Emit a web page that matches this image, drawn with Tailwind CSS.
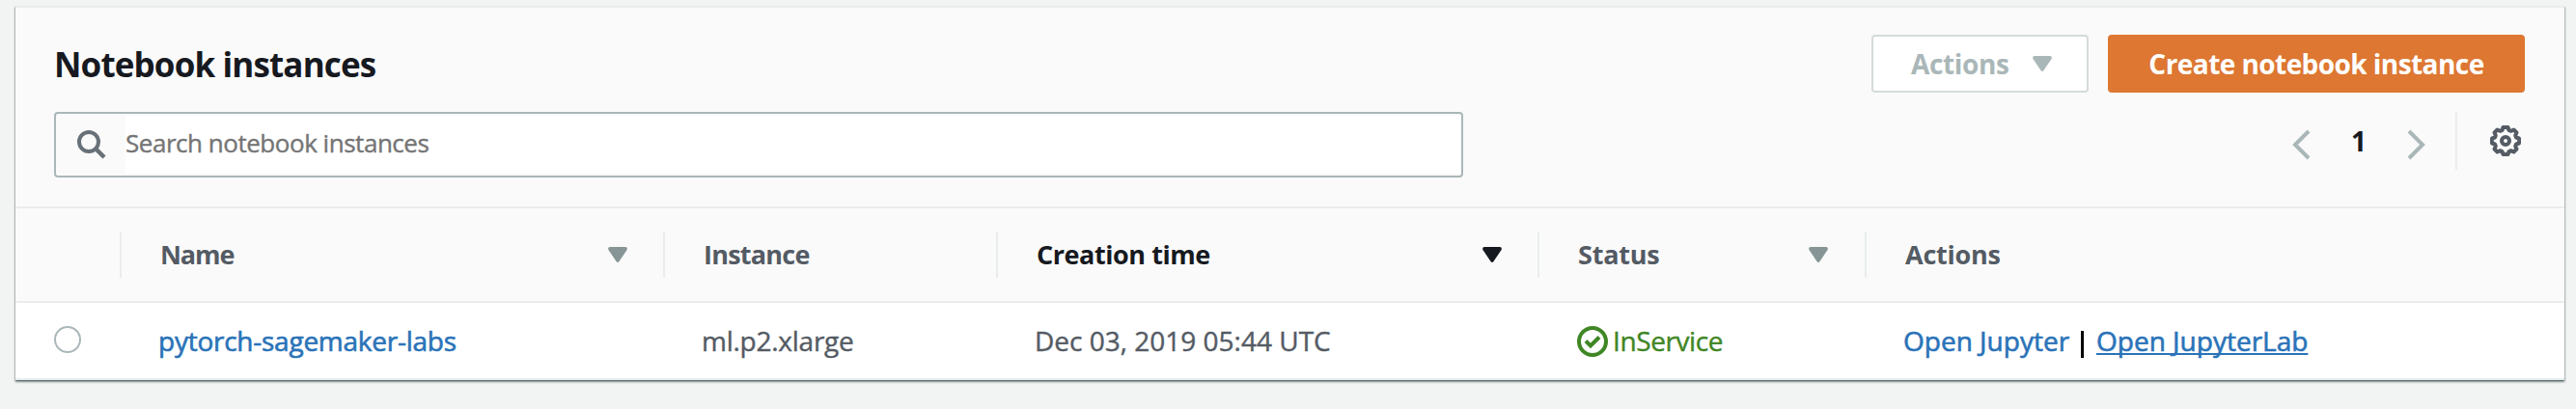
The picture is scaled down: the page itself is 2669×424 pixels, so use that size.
<!DOCTYPE html>
<html lang="en">
<head>
<meta charset="utf-8">
<title>Notebook instances</title>
<script src="https://cdn.jsdelivr.net/npm/@tailwindcss/browser@4"></script>
</head>
<body class="h-[424px] overflow-hidden bg-[#f2f3f3] pt-[6px] pl-4 font-['Open_Sans','Noto_Sans',sans-serif] text-[28px] text-[#545b64]">
<main class="w-[2641px] border-t-2 border-[#eaeded] bg-white shadow-[0_2px_2px_0_rgba(0,28,36,0.5),1px_1px_1px_0_rgba(0,28,36,0.13),-1px_1px_1px_0_rgba(0,28,36,0.13)]">
  <header class="h-[208px] border-b-2 border-[#eaeded] bg-[#fafafa] pt-7 pr-[41px] pl-10">
    <div class="flex h-[60px] items-center justify-between">
      <h1 class="pt-[2px] text-[35px] leading-[60px] font-bold tracking-[-0.86px] text-[#16191f]">Notebook instances</h1>
      <div class="flex gap-5">
        <button class="flex h-[60px] w-[225px] items-center rounded-[4px] border-2 border-[#d5dbdb] bg-white pl-[39px] font-bold tracking-[-0.37px] text-[#aab7b8]">
          <span class="w-[126px] pb-[1px] text-left leading-[54px]">Actions</span>
          <svg class="h-4 w-5" viewBox="0 0 20 16" fill="currentColor"><path d="M2 0h16q2.6.5 1.6 3L11.5 15q-1.500 2-3 0L.4 3Q-.6.500 2 0z"/></svg>
        </button>
        <button class="h-[60px] w-[432px] rounded-[4px] bg-[#dd7732] pb-[1px] font-bold tracking-[-0.56px] whitespace-nowrap text-white">Create notebook instance</button>
      </div>
    </div>
    <div class="mt-5 flex h-[68px] justify-between">
      <div class="flex w-[1460px] rounded-[4px] border-2 border-[#aab7b8] bg-[#fafafa] py-[2px]">
        <div class="flex w-[72px] items-center pl-[22px]">
          <svg class="h-[30px] w-[30px]" viewBox="0 0 30 30" fill="none" stroke="#687078" stroke-width="4"><circle cx="12" cy="12" r="10"/><path d="M19 19l9 9" stroke-width="4.500"/></svg>
        </div>
        <div class="flex-1 rounded-r-[2px] bg-white pb-[3px] text-[26px] leading-[57px] tracking-[-0.47px] text-[#757575] [-webkit-text-stroke:0.4px_currentColor]">Search notebook instances</div>
      </div>
      <div class="flex h-[60px] items-center">
        <svg class="mt-2 h-8 w-5" viewBox="0 0 20 32" fill="none" stroke="#aab7b8" stroke-width="4"><path d="M18 2L4 16l14 14"/></svg>
        <span class="w-[100px] text-center text-[28px] leading-[60px] font-bold text-[#16191f]">1</span>
        <svg class="mt-2 h-8 w-5" viewBox="0 0 20 32" fill="none" stroke="#aab7b8" stroke-width="4"><path d="M2 2l14 14L2 30"/></svg>
        <span class="ml-[30px] h-[60px] w-[2px] bg-[#eaeded]"></span>
        <svg class="mr-1 ml-[34px] h-8 w-8" viewBox="0 0 32 32" fill="none" stroke="#545b64" stroke-width="4"><path stroke-linejoin="round" d="M13.500 2h5l1 3 2 .8 3-1.300 3 3-1.300 3 .8 2 3 1v5l-3 1-.8 2 1.300 3-3 3-3-1.300-2 .8-1 3h-5l-1-3-2-.8-3 1.300-3-3 1.300-3-.8-2-3-1v-5l3-1 .8-2-1.300-3 3-3 3 1.300 2-.8z"/><circle cx="16" cy="16" r="4"/></svg>
      </div>
    </div>
  </header>
  <div class="grid h-[98px] grid-cols-[110px_563px_345px_561px_339px_1fr] items-center border-b-2 border-[#eaeded] bg-[#fafafa] text-[27px] leading-[48px] font-bold">
    <div class="h-12 border-r-2 border-[#eaeded]"></div>
    <div class="flex h-12 items-center justify-between border-r-2 border-[#eaeded] pr-[37px] pl-10 tracking-[-1.1px]">Name
      <svg class="h-4 w-5" viewBox="0 0 20 16" fill="#879596"><path d="M2 0h16q2.6.5 1.6 3L11.5 15q-1.500 2-3 0L.4 3Q-.6.500 2 0z"/></svg>
    </div>
    <div class="h-12 border-r-2 border-[#eaeded] pl-10 tracking-[-0.76px]">Instance</div>
    <div class="flex h-12 items-center justify-between border-r-2 border-[#eaeded] pr-[37px] pl-10 tracking-[-0.44px] text-[#16191f]">Creation time
      <svg class="h-4 w-5" viewBox="0 0 20 16" fill="currentColor"><path d="M2 0h16q2.6.5 1.6 3L11.5 15q-1.500 2-3 0L.4 3Q-.6.500 2 0z"/></svg>
    </div>
    <div class="flex h-12 items-center justify-between border-r-2 border-[#eaeded] pr-[38px] pl-10 tracking-[-0.2px]">Status
      <svg class="h-4 w-5" viewBox="0 0 20 16" fill="#879596"><path d="M2 0h16q2.6.5 1.6 3L11.5 15q-1.500 2-3 0L.4 3Q-.6.500 2 0z"/></svg>
    </div>
    <div class="pl-10 tracking-[-0.25px]">Actions</div>
  </div>
  <div class="grid h-20 grid-cols-[110px_563px_345px_561px_339px_1fr] items-center border-b-2 border-[#eaeded] leading-[78px] whitespace-nowrap [-webkit-text-stroke:0.4px_currentColor]">
    <div class="pl-10"><div class="-mt-[2px] h-7 w-7 rounded-full border-2 border-[#aab7b8] bg-white"></div></div>
    <a class="pl-[38px] tracking-[-0.25px] text-[#2a73b8] [-webkit-text-stroke:0.6px_currentColor]">pytorch-sagemaker-labs</a>
    <div class="pl-[38px] tracking-[-0.25px]">ml.p2.xlarge</div>
    <div class="pl-[38px]">Dec 03, 2019 05:44 UTC</div>
    <div class="flex items-center pl-[39px] tracking-[-0.4px] text-[#3f8624]">
      <svg class="mt-[2px] mr-1 h-8 w-8" viewBox="0 0 32 32" fill="none" stroke="currentColor" stroke-width="4"><circle cx="16" cy="16" r="14"/><path d="M9 15.500l5 5 9-9"/></svg>
      <span class="pl-[1px]">InService</span>
    </div>
    <div class="flex pl-[38px] text-[#2a73b8] [-webkit-text-stroke:0.6px_currentColor]">
      <a class="w-[184px]">Open Jupyter</a>
      <span class="mt-[29px] h-7 w-[3px] bg-black"></span>
      <a class="ml-[13px] underline decoration-2 underline-offset-[2px] [text-decoration-skip-ink:none]">Open JupyterLab</a>
    </div>
  </div>
</main>
</body>
</html>
